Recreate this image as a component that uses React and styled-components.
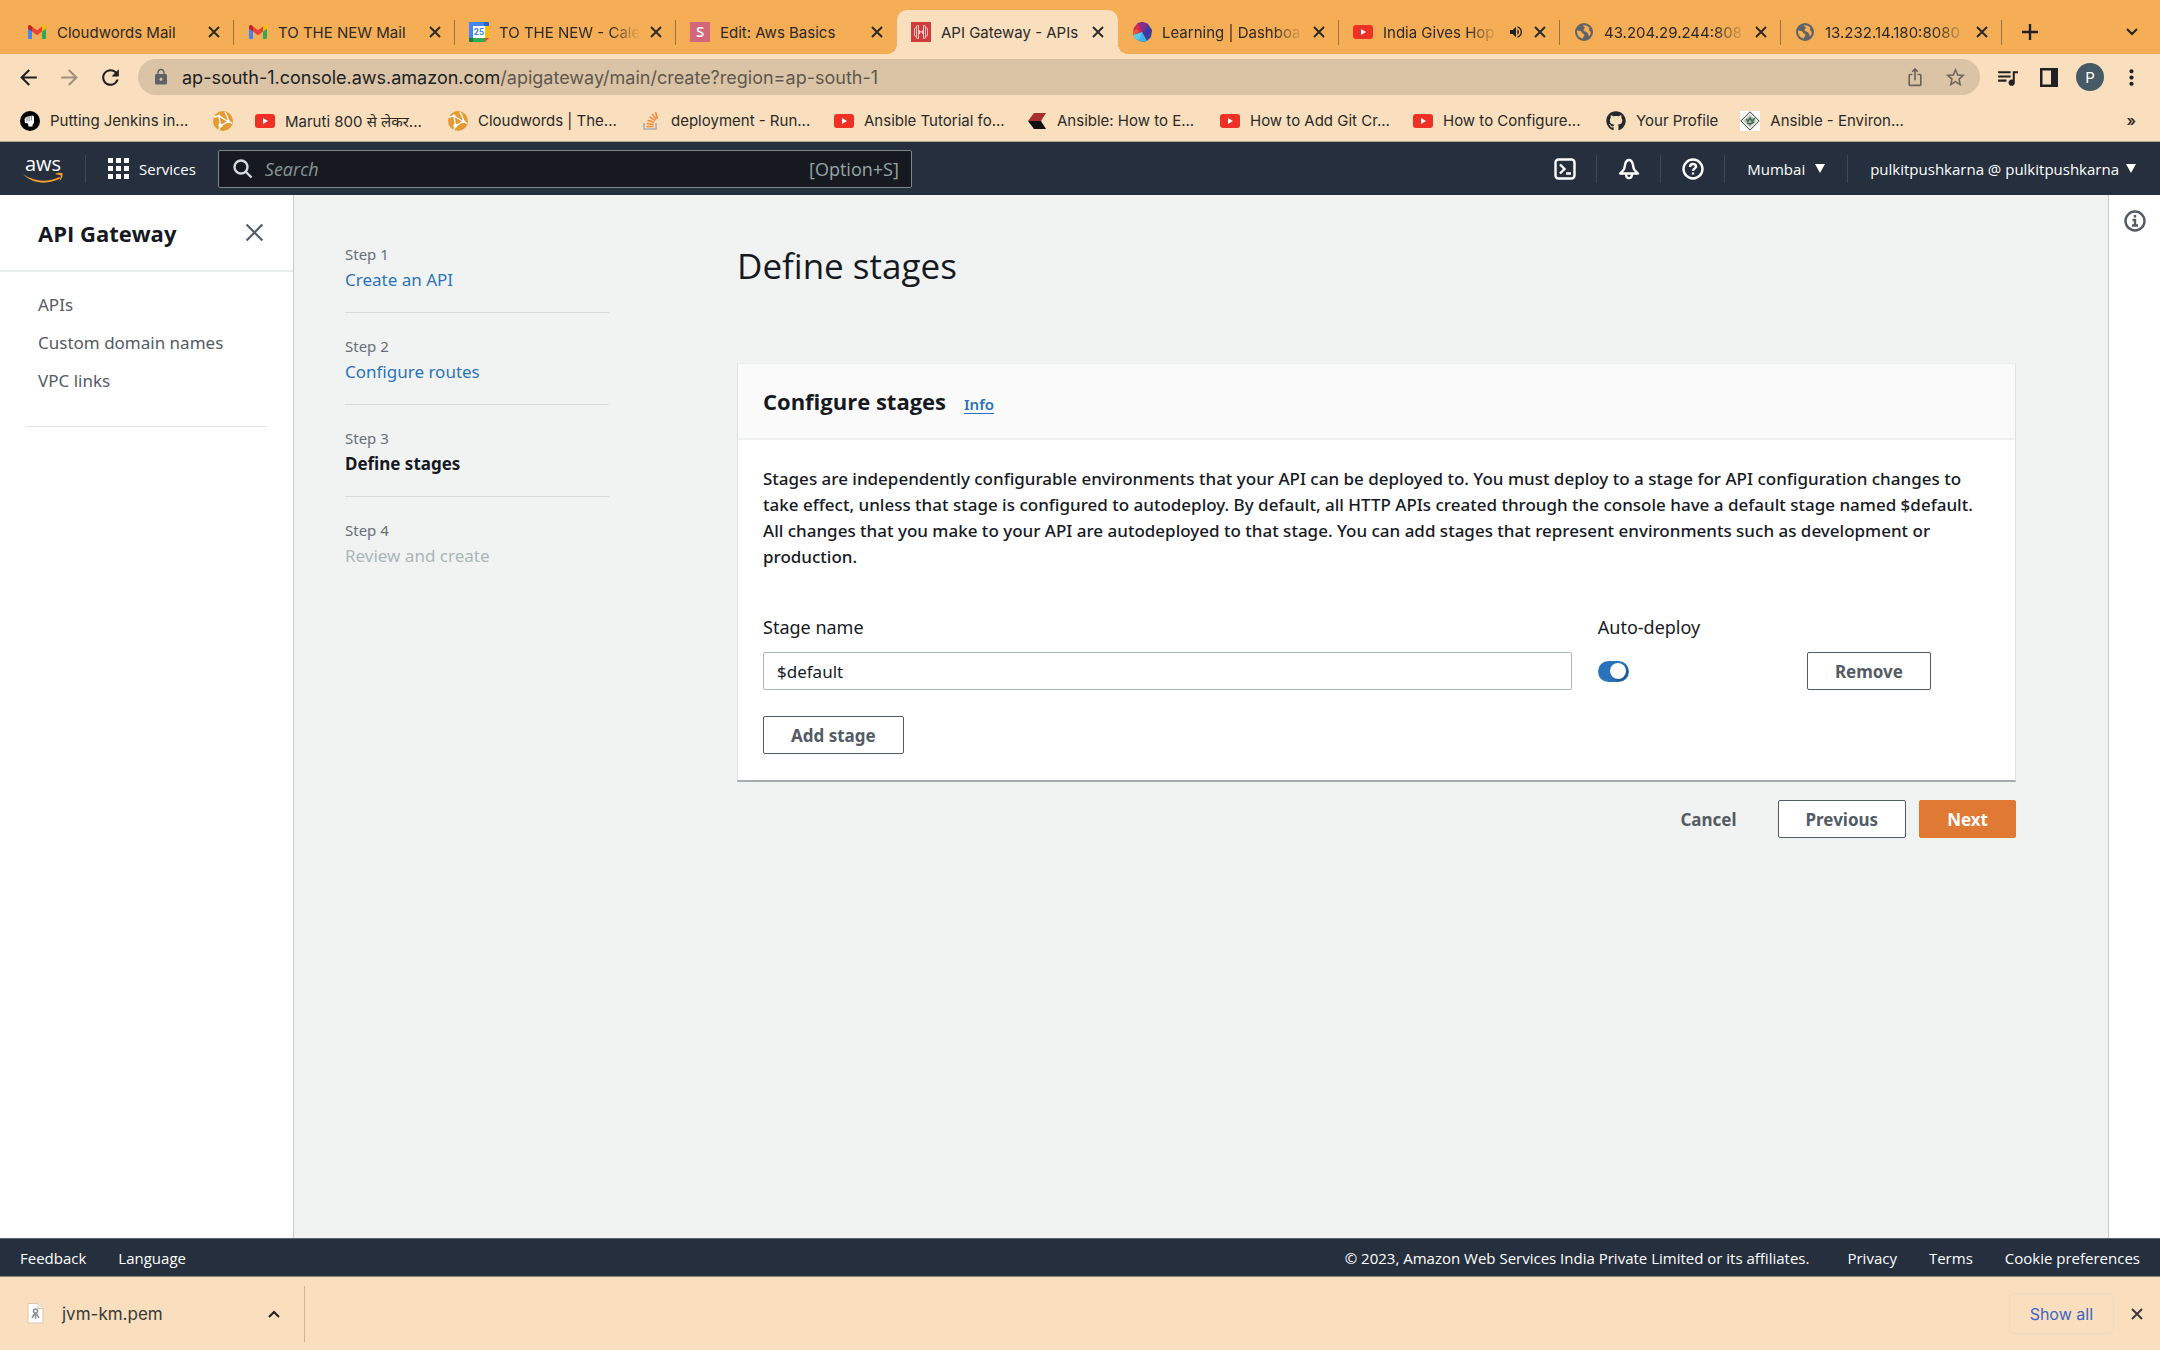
import React, { useState } from 'react';
import styled, { createGlobalStyle, css } from 'styled-components';
import {
  MdArrowBack,
  MdArrowForward,
  MdRefresh,
  MdLock,
  MdIosShare,
  MdStarBorder,
  MdQueueMusic,
  MdMoreVert,
  MdVolumeUp,
} from 'react-icons/md';
import { FaGithub } from 'react-icons/fa';

const GlobalStyle = createGlobalStyle`
  * {
    box-sizing: border-box;
  }
  body {
    margin: 0;
    font-family: 'Noto Sans', 'Open Sans', sans-serif;
    font-size: 17px;
    color: #16191f;
  }
  h1, h2, nav, footer {
    font-family: 'Open Sans', 'Noto Sans', sans-serif;
  }
  button, input {
    font-family: inherit;
    font-size: inherit;
  }
  button {
    cursor: pointer;
  }
  a {
    text-decoration: none;
    color: inherit;
  }
`;

const Window = styled.div`
  display: flex;
  flex-direction: column;
  min-height: 100vh;
`;

const BrowserHeader = styled.header`
  font-family: Inter, 'Noto Sans', sans-serif;
  font-size: 15px;
  color: #2b2a29;
  background-color: #f9dfbd;
  border-bottom: 1px solid #b3a68f;
`;

const PlainButton = styled.button`
  display: flex;
  align-items: center;
  justify-content: center;
  padding: 0;
  border: none;
  background: none;
  color: inherit;
`;

/* ---------- tab strip ---------- */

const TabStrip = styled.div`
  display: flex;
  align-items: flex-end;
  height: 54px;
  padding: 0 20px 0 13px;
  background-color: #f5ae56;
`;

const Tab = styled.div`
  position: relative;
  display: flex;
  align-items: center;
  flex: 0 1 221px;
  min-width: 0;
  height: 44px;
  padding: 0 14px;
  gap: 10px;

  ${props => props.$active && css`
    background-color: #f9dfbd;
    border-radius: 10px 10px 0 0;

    &::before, &::after {
      content: '';
      position: absolute;
      bottom: 0;
      width: 10px;
      height: 10px;
    }
    &::before {
      left: -10px;
      background: radial-gradient(circle at 0 0, transparent 10px, #f9dfbd 10px);
    }
    &::after {
      right: -10px;
      background: radial-gradient(circle at 100% 0, transparent 10px, #f9dfbd 10px);
    }
  `}

  ${props => props.$divider && css`
    background: linear-gradient(#9c7440, #9c7440) right center / 1px 25px no-repeat;
  `}
`;

const TabLabel = styled.span`
  flex: 1;
  min-width: 0;
  white-space: nowrap;
  ${props => props.$fade && css`
    mask-image: linear-gradient(to right, #000 calc(100% - 30px), transparent);
  `}
`;

const StripButton = styled(PlainButton)`
  height: 44px;
  width: 40px;
  margin-left: ${props => (props.$last ? 'auto' : '8px')};
  margin-right: ${props => (props.$last ? '-12px' : '0')};
`;

/* ---------- toolbar ---------- */

const Toolbar = styled.div`
  display: flex;
  align-items: center;
  height: 46px;
  padding: 0 15px;
  gap: 14px;
`;

const ToolGroup = styled.div`
  display: flex;
  align-items: center;
  gap: 14px;
  color: #202124;
`;

const ToolButton = styled(PlainButton)`
  width: 27px;
  height: 28px;
  font-size: 25px;
  color: ${props => props.$color || 'inherit'};
`;

const Omnibox = styled.div`
  flex: 1;
  display: flex;
  align-items: center;
  height: 36px;
  padding: 0 11px 0 14px;
  gap: 12px;
  border-radius: 18px;
  background-color: #dbc4a6;
  color: #5f6368;
  font-size: 18px;
`;

const Url = styled.span`
  flex: 1;
  color: #5f584f;
  white-space: nowrap;
  b {
    font-weight: 400;
    color: #202124;
  }
`;

const Avatar = styled(PlainButton)`
  width: 28px;
  height: 28px;
  border-radius: 50%;
  background-color: #455a64;
  color: #fff;
  font-size: 15px;
`;

/* ---------- bookmarks ---------- */

const Bookmarks = styled.nav`
  display: flex;
  align-items: center;
  height: 41px;
  padding: 0 24px 0 20px;
  gap: 22px;
  font-family: Inter, 'Noto Sans', sans-serif;
`;

const Bookmark = styled.a`
  display: flex;
  align-items: center;
  gap: 10px;
  white-space: nowrap;
  svg {
    flex: none;
  }
`;

const BookmarkLabel = styled.span`
  width: ${props => (props.$cut ? '141px' : 'auto')};
`;

const MoreBookmarks = styled(PlainButton)`
  margin-left: auto;
  font-weight: 600;
`;

/* ---------- console nav ---------- */

const ConsoleNav = styled.nav`
  display: flex;
  align-items: center;
  height: 53px;
  padding: 0 24px 0 22px;
  background-color: #252f3e;
  color: #fff;
  font-size: 15px;
  font-weight: 500;
`;

const LogoLink = styled.a`
  display: flex;
  margin-right: 21px;
`;

const NavDivider = styled.span`
  width: 1px;
  height: 28px;
  background-color: #414750;
`;

const NavButton = styled(PlainButton)`
  gap: 10px;
  padding: 0 22px;
  white-space: nowrap;
  font-weight: 500;
`;

const NavIcon = styled(PlainButton)`
  width: 63px;
`;

const SearchBox = styled.label`
  display: flex;
  align-items: center;
  flex: 0 1 694px;
  height: 38px;
  padding: 0 12px 0 14px;
  gap: 12px;
  background-color: #16191f;
  border: 1px solid #7b8788;
  border-radius: 2px;
  color: #95a5a6;
  font-size: 18px;
`;

const SearchInput = styled.input`
  flex: 1;
  min-width: 0;
  padding: 0;
  border: none;
  outline: none;
  background: none;
  color: #fff;
  &::placeholder {
    color: #879596;
    font-style: italic;
  }
`;

const NavRight = styled.div`
  display: flex;
  align-items: center;
  margin-left: auto;
`;

const UserButton = styled(NavButton)`
  padding-right: 0;
  gap: 7px;
`;

/* ---------- page ---------- */

const Page = styled.div`
  flex: 1;
  display: flex;
  background-color: #f1f3f3;
`;

const SideNav = styled.aside`
  flex: 0 0 294px;
  background-color: #fff;
  border-right: 1px solid #c5cccc;
`;

const SideHeader = styled.div`
  display: flex;
  align-items: center;
  justify-content: space-between;
  height: 77px;
  padding: 0 29px 0 38px;
  border-bottom: 2px solid #eaeded;
  color: #545b64;
`;

const SideTitle = styled.h2`
  margin: 0;
  font-size: 22px;
  line-height: 28px;
  color: #16191f;
`;

const SideLinks = styled.ul`
  display: flex;
  flex-direction: column;
  gap: 12px;
  margin: 0 26px;
  padding: 20px 12px 32px;
  border-bottom: 1px solid #e3e6e6;
  list-style: none;
  line-height: 26px;
  color: #545b64;
`;

const Wizard = styled.main`
  flex: 1;
  display: grid;
  grid-template-columns: 264px minmax(0, 1fr);
  align-items: start;
  column-gap: 128px;
  padding: 46px 92px 0 51px;
`;

const Steps = styled.ol`
  margin: 0;
  padding: 0;
  list-style: none;
`;

const Step = styled.li`
  height: 92px;
  & + & {
    border-top: 1px solid #d5dbdb;
    padding-top: 20px;
  }
  &:first-child {
    height: 71px;
  }
`;

const StepLabel = styled.div`
  font-size: 15px;
  line-height: 26px;
  color: #687078;
`;

const stepColors = { done: '#2a73bb', current: '#16191f', todo: '#aab7b8' };

const StepName = styled.a`
  display: block;
  line-height: 26px;
  font-weight: ${props => (props.$state === 'current' ? 700 : 400)};
  color: ${props => stepColors[props.$state]};
`;

const PageTitle = styled.h1`
  margin: 0 0 72px;
  font-size: 35px;
  line-height: 50px;
  font-weight: 400;
`;

const Card = styled.section`
  background-color: #fff;
  border: 1px solid #dfe3e3;
  border-top-color: #eaeded;
  border-bottom: 2px solid #a5abae;
`;

const CardHeader = styled.div`
  display: flex;
  align-items: baseline;
  gap: 18px;
  padding: 23px 25px 23px;
  background-color: #fafafa;
  border-bottom: 2px solid #eff1f1;
`;

const CardTitle = styled.h2`
  margin: 0;
  font-size: 22px;
  line-height: 28px;
`;

const InfoLink = styled.a`
  font-size: 15px;
  font-weight: 600;
  color: #2a73bb;
  text-decoration: underline;
  text-underline-offset: 3px;
`;

const CardBody = styled.div`
  padding: 26px 25px;
`;

const Description = styled.p`
  max-width: 1210px;
  margin: 0 0 44px;
  line-height: 26px;
  font-weight: 500;
`;

const StageGrid = styled.div`
  display: grid;
  grid-template-columns: 53fr 12fr 12fr;
  column-gap: 26px;
  align-items: end;
  margin-bottom: 26px;
`;

const Field = styled.div`
  display: flex;
  flex-direction: column;
  align-items: flex-start;
  gap: 12px;
  line-height: 26px;
`;

const FieldLabel = styled.label`
  font-size: 18px;
`;

const TextInput = styled.input`
  width: 100%;
  height: 38px;
  padding: 0 13px;
  border: 1px solid #aab7b8;
  border-radius: 2px;
  background-color: #fff;
  color: #16191f;
`;

const ToggleSlot = styled.div`
  display: flex;
  align-items: center;
  height: 38px;
`;

const Toggle = styled.input`
  appearance: none;
  display: flex;
  justify-content: ${props => (props.checked ? 'flex-end' : 'flex-start')};
  align-items: center;
  width: 31px;
  height: 21px;
  margin: 0;
  padding: 0 3px;
  border-radius: 11px;
  background-color: ${props => (props.checked ? '#2a73b8' : '#879596')};
  cursor: pointer;
  &::before {
    content: '';
    width: 16px;
    height: 16px;
    border-radius: 50%;
    background-color: #fff;
    box-shadow: 1px 1px 0 1px rgba(0, 28, 80, 0.3);
  }
`;

const Button = styled.button`
  height: 38px;
  padding: 0 27px;
  border: 1px solid #545b64;
  border-radius: 2px;
  background-color: #fff;
  color: #545b64;
  font-weight: 700;
  justify-self: start;

  ${props => props.$variant === 'link' && css`
    border-color: transparent;
    background-color: transparent;
  `}
  ${props => props.$variant === 'primary' && css`
    border-color: #e07933;
    background-color: #e07933;
    color: #fff;
  `}
`;

const Actions = styled.div`
  display: flex;
  justify-content: flex-end;
  gap: 13px;
  margin-top: 18px;
`;

const InfoRail = styled.aside`
  flex: 0 0 52px;
  display: flex;
  flex-direction: column;
  align-items: center;
  padding-top: 15px;
  background-color: #fff;
  border-left: 1px solid #c5cccc;
  color: #545b64;
`;

const Footer = styled.footer`
  display: flex;
  align-items: center;
  height: 39px;
  padding: 0 20px;
  gap: 32px;
  border-top: 1px solid #5a626d;
  border-bottom: 1px solid #8d857b;
  background-color: #252f3e;
  color: #fff;
  font-size: 15px;
  font-weight: 500;
  white-space: nowrap;
`;

const Copyright = styled.span`
  margin-left: auto;
  margin-right: 6px;
`;

/* ---------- downloads ---------- */

const DownloadBar = styled.div`
  display: flex;
  align-items: center;
  height: 73px;
  padding: 0 17px 0 27px;
  background-color: #f9dfbd;
  font-family: Inter, sans-serif;
  font-size: 17px;
  color: #3c3a37;
`;

const DownloadItem = styled.div`
  display: flex;
  align-items: center;
  gap: 18px;
  width: 278px;
  height: 56px;
  padding-right: 23px;
  border-right: 1px solid #c9b497;
`;

const DownloadName = styled.span`
  flex: 1;
`;

const ShowAll = styled(PlainButton)`
  height: 41px;
  margin-left: auto;
  margin-right: 17px;
  padding: 0 20px;
  border: 1px solid #ecdcc4;
  border-radius: 5px;
  color: #3a66c4;
  font-size: 16px;
`;

/* ---------- icons ---------- */

const CrossIcon = ({ size = 12, width = 2 }) => (
  <svg width={size} height={size} viewBox="0 0 12 12" fill="none" stroke="currentColor" strokeWidth={width}>
    <path d="M1 1l10 10M11 1L1 11" />
  </svg>
);

const ChevronIcon = ({ up }) => (
  <svg width="14" height="10" viewBox="0 0 14 10" fill="none" stroke="#202124" strokeWidth="2">
    <path d={up ? 'M2 8l5-5 5 5' : 'M2 2l5 5 5-5'} />
  </svg>
);

const GmailIcon = () => (
  <svg width="20" height="20" viewBox="0 0 20 20">
    <path d="M1 5.500V16a1 1 0 0 0 1 1h3V9z" fill="#4285f4" />
    <path d="M19 5.500V16a1 1 0 0 1-1 1h-3V9z" fill="#34a853" />
    <path d="M15 5v4.500l4-3V5c0-2-2-2.700-3.200-1.700z" fill="#fbbc04" />
    <path d="M5 9.500V4.500l5 3.800 5-3.800v5l-5 3.800z" fill="#ea4335" />
    <path d="M1 5v1.500l4 3v-5l-.8-.7C3 2.500 1 3 1 5z" fill="#c5221f" />
  </svg>
);

const CalendarIcon = () => (
  <svg width="20" height="20" viewBox="0 0 20 20">
    <path d="M1 0h14v4H4v12H0V1a1 1 0 0 1 1-1z" fill="#4285f4" />
    <path d="M15 0h4a1 1 0 0 1 1 1v4h-5z" fill="#1967d2" />
    <path d="M16 4h4v12h-4z" fill="#fbbc04" />
    <path d="M0 16h4v4H1a1 1 0 0 1-1-1z" fill="#188038" />
    <path d="M4 16h12v4H4z" fill="#34a853" />
    <path d="M16 16h4l-4 4z" fill="#ea4335" />
    <path d="M4 4h12v12H4z" fill="#fff" />
    <text x="10" y="13" textAnchor="middle" fontFamily="Roboto, sans-serif" fontSize="9" fontWeight="700" fill="#4285f4">25</text>
  </svg>
);

const LetterIcon = () => (
  <svg width="20" height="20" viewBox="0 0 20 20">
    <path d="M0 0h20v20H0z" fill="#d4667c" />
    <text x="10" y="15" textAnchor="middle" fontFamily="Open Sans, sans-serif" fontSize="15" fontWeight="600" fill="#fff">S</text>
  </svg>
);

const GatewayIcon = () => (
  <svg width="20" height="20" viewBox="0 0 20 20" fill="none" stroke="#f6c3c4" strokeWidth="1">
    <path d="M0 0h20v20H0z" fill="#d13c41" stroke="none" />
    <path d="M5.500 5.500L3.500 6.500v7l2 1zM5.500 4l2-0.500v13l-2-.5zM14.500 5.500l2 1v7l-2 1zM14.500 4l-2-0.500v13l2-.5zM8.500 12V8.500l1.500 2 1.500-2V12" />
  </svg>
);

const LearningIcon = () => (
  <svg width="20" height="20" viewBox="0 0 20 20">
    <path d="M6 1l5-1 5 2 4 6-1 7-4 4-5 1-6-3-3-5 1-6z" fill="#3b3f9f" />
    <path d="M6 1l5-1 5 2-3 6-4 3-4-4z" fill="#8a2b8c" />
    <path d="M2 6l4-5 2 5 2 5-4 1-5 1z" fill="#d8294a" />
    <path d="M1 9l4-2 2 3-6 3z" fill="#f0563a" />
    <path d="M10 10l5 9-5 1-6-3-3-4 5-1z" fill="#3fb2e8" />
    <path d="M10 10l-3 8-3-1-3-4z" fill="#5ccbf2" />
    <path d="M13 8l6-1 1 3-7 3z" fill="#4a2fa5" />
  </svg>
);

const YoutubeIcon = () => (
  <svg width="20" height="20" viewBox="0 0 20 20">
    <rect x="0" y="3" width="20" height="14" rx="3" fill="#ee3124" />
    <path d="M8 7l5 3-5 3z" fill="#fff" />
  </svg>
);

const FistIcon = () => (
  <svg width="20" height="20" viewBox="0 0 20 20">
    <circle cx="10" cy="10" r="10" fill="#000" />
    <path d="M4.500 8l1.500-2 6.500-1.500 1.500 1v6l-1.500 2.500v1.500H8.500l-.5-3-3-.5z" fill="#fff" />
    <path d="M7 6v4.500M9.200 5.500v5M11.400 5v4.500" stroke="#000" strokeWidth=".5" fill="none" />
  </svg>
);

const CloudwordsIcon = () => (
  <svg width="20" height="20" viewBox="0 0 20 20">
    <circle cx="10" cy="10" r="10" fill="#e59a35" />
    <path d="M1 6l5-1 9 5.500-7.500 4.500L6 5M12 1l2 4 2 5.500 3 2M7 15.500l-1 3.500" stroke="#fff" strokeWidth="1.300" fill="none" />
    <circle cx="15.500" cy="10.500" r="1.600" fill="#fff" />
    <circle cx="7.500" cy="14.500" r="2.100" fill="#fff" />
    <circle cx="6" cy="5" r="1.400" fill="#fff" />
  </svg>
);

const StackIcon = () => (
  <svg width="20" height="20" viewBox="0 0 20 20" fill="none">
    <path d="M3 12v6h12v-6" stroke="#a9adb0" strokeWidth="1.600" />
    <path d="M5.500 15.500h7M5.700 12.500l7 .9M6.600 9.200l6.500 2M8.500 5.800l5.700 3.700M11.200 3l4.200 5.300M14.500 1l2 6.500" stroke="#ef8b3c" strokeWidth="1.500" />
  </svg>
);

const ChevronLogo = () => (
  <svg width="20" height="20" viewBox="0 0 20 20">
    <path d="M7 2h12l-5 8H1z" fill="#a5302d" />
    <path d="M1 10h13l5 8H7z" fill="#111" />
  </svg>
);

const DiamondIcon = () => (
  <svg width="20" height="20" viewBox="0 0 20 20">
    <path d="M0 0h20v20H0z" fill="#fff" />
    <path d="M10 .800l9.200 9.200-9.200 9.200-9.200-9.200z" fill="#e6e8e6" stroke="#3c403e" strokeWidth="1" />
    <path d="M10 4l6 6-6 6-6-6z" fill="#a9bbad" />
    <path d="M6 8l2 2 2-3 2 3 3-3M7 12l3 1 4-2" stroke="#3f6b4c" strokeWidth="1.500" fill="none" />
  </svg>
);

const AwsLogo = () => (
  <svg width="42" height="40" viewBox="0 0 42 40">
    <text x="21" y="22" textAnchor="middle" fontFamily="Open Sans, sans-serif" fontSize="20" fontWeight="500" fill="#fff">aws</text>
    <path d="M1 25c11 8 25 8.500 36.500 3l.6 1.600C26 36 10 35 1 25z" fill="#f49c2e" />
    <path d="M33 25c3-1.500 6.500-1.300 7.500-.6.600 1.300-.6 5.600-3 7.600 .6-2.200 1.800-4.600 1.100-5.500-.7-.8-3.200-.8-5.600-1.500z" fill="#f49c2e" />
  </svg>
);

const GridIcon = () => (
  <svg width="21" height="21" viewBox="0 0 21 21" fill="#fff">
    {[0, 8, 16].map(y => [0, 8, 16].map(x => <rect key={`${x}-${y}`} x={x} y={y} width="5" height="5" />))}
  </svg>
);

const SearchIcon = () => (
  <svg width="20" height="20" viewBox="0 0 20 20" fill="none" stroke="#d5dbdb" strokeWidth="2.400">
    <circle cx="8" cy="8" r="6.500" />
    <path d="M12.500 12.500l6 6" />
  </svg>
);

const TerminalIcon = () => (
  <svg width="22" height="22" viewBox="0 0 22 22" fill="none" stroke="#fff" strokeWidth="2.400">
    <rect x="1.500" y="1.500" width="19" height="19" rx="3" />
    <path d="M6 6.500l4.500 4.500L6 15.500M12 15.500h5" />
  </svg>
);

const BellIcon = () => (
  <svg width="22" height="22" viewBox="0 0 22 22" fill="none" stroke="#fff" strokeWidth="2.400" strokeLinejoin="round">
    <path d="M2 15.500h18l-3.500-3.500c-1.300-1.300-.9-3-1.500-5C14.400 4 13 2 11 2S7.600 4 7 7c-.6 2-.2 3.700-1.500 5z" />
    <path d="M8 16c0 5.500 6 5.500 6 0" />
  </svg>
);

const HelpIcon = () => (
  <svg width="22" height="22" viewBox="0 0 22 22" fill="none" stroke="#fff" strokeWidth="2.400">
    <circle cx="11" cy="11" r="9.500" />
    <path d="M8 9c0-4 6-4 6-.5 0 2-3 2-3 4.500" />
    <path d="M11 14.500v2" />
  </svg>
);

const Caret = () => (
  <svg width="10" height="9" viewBox="0 0 10 9" fill="#fff">
    <path d="M0 0h10L5 9z" />
  </svg>
);

const InfoIcon = () => (
  <svg width="22" height="22" viewBox="0 0 22 22" fill="none" stroke="currentColor" strokeWidth="2.400">
    <circle cx="11" cy="11" r="9.500" />
    <path d="M11 5v2.500M8.500 10H11v5.500M8 15.500h6" />
  </svg>
);

const PanelIcon = () => (
  <svg width="20" height="19" viewBox="0 0 20 19">
    <path d="M1 0h18v19H1zM3.500 2.500v14H12v-14z" fill="#202124" fillRule="evenodd" />
  </svg>
);

const FileIcon = () => (
  <svg width="17" height="21" viewBox="0 0 17 21">
    <path d="M1 .500h10l5 5v14.500H1z" fill="#fff" stroke="#d6c9b5" />
    <path d="M11 .500v5h5" fill="#eee" stroke="#d6c9b5" />
    <circle cx="8.500" cy="8" r="2" fill="none" stroke="#8b9093" strokeWidth="1.500" />
    <path d="M8 10l-3 5M8.500 10v6M9 10l3 5" stroke="#8b9093" strokeWidth="1.500" />
  </svg>
);

const GlobeIcon = () => (
  <svg width="20" height="20" viewBox="0 0 20 20">
    <circle cx="10" cy="10" r="9" fill="#5f6368" />
    <path d="M3 8.500c2 .5 4.500.2 5 2 .4 1.500 2.500 1 2.500 2.500 0 1.200-1.500 1.300-1.500 3.500-3.500-.3-6.500-3.500-6-8zM9 3.500c2.500-.5 5 .5 6.500 2.500-1 1.500-.5 2.500 1 3.500.5 2-.2 3.500-1.500 5-.8-1.500-.5-3.500-2.500-4.500-1.500-.7-3-.5-3-2s2-1.500 1.500-2.500S9 5 9 3.500z" fill="#f5ae56" />
  </svg>
);

/* ---------- data ---------- */

const tabs = [
  { icon: GmailIcon, label: 'Cloudwords Mail', divider: true },
  { icon: GmailIcon, label: 'TO THE NEW Mail', divider: true },
  { icon: CalendarIcon, label: 'TO THE NEW - Cale', fade: true, divider: true },
  { icon: LetterIcon, label: 'Edit: Aws Basics' },
  { icon: GatewayIcon, label: 'API Gateway - APIs', active: true },
  { icon: LearningIcon, label: 'Learning | Dashboa', fade: true, divider: true },
  { icon: YoutubeIcon, label: 'India Gives Hop', fade: true, audio: true, divider: true },
  { icon: GlobeIcon, label: '43.204.29.244:808', fade: true, divider: true },
  { icon: GlobeIcon, label: '13.232.14.180:8080', fade: true, divider: true },
];

const bookmarks = [
  { icon: FistIcon, label: 'Putting Jenkins in...', cut: true },
  { icon: CloudwordsIcon },
  { icon: YoutubeIcon, label: 'Maruti 800 से लेकर...', cut: true },
  { icon: CloudwordsIcon, label: 'Cloudwords | The...', cut: true },
  { icon: StackIcon, label: 'deployment - Run...', cut: true },
  { icon: YoutubeIcon, label: 'Ansible Tutorial fo...', cut: true },
  { icon: ChevronLogo, label: 'Ansible: How to E...', cut: true },
  { icon: YoutubeIcon, label: 'How to Add Git Cr...', cut: true },
  { icon: YoutubeIcon, label: 'How to Configure...', cut: true },
  { icon: () => <FaGithub size={20} color="#24292e" />, label: 'Your Profile' },
  { icon: DiamondIcon, label: 'Ansible - Environ...', cut: true },
];

const steps = [
  { name: 'Create an API', state: 'done' },
  { name: 'Configure routes', state: 'done' },
  { name: 'Define stages', state: 'current' },
  { name: 'Review and create', state: 'todo' },
];

const App = () => {
  const [stageName, setStageName] = useState('$default');
  const [autoDeploy, setAutoDeploy] = useState(true);

  return (
    <Window>
      <GlobalStyle />
      <BrowserHeader>
        <TabStrip>
          {tabs.map(({ icon: Icon, label, active, fade, audio, divider }) => (
            <Tab key={label} $active={active} $divider={divider}>
              <Icon />
              <TabLabel $fade={fade}>{label}</TabLabel>
              {audio && <MdVolumeUp size={16} color="#202124" />}
              <PlainButton aria-label="Close tab"><CrossIcon /></PlainButton>
            </Tab>
          ))}
          <StripButton aria-label="New tab">
            <svg width="16" height="16" viewBox="0 0 16 16" stroke="#202124" strokeWidth="2.400">
              <path d="M8 0v16M0 8h16" />
            </svg>
          </StripButton>
          <StripButton $last aria-label="Search tabs"><ChevronIcon /></StripButton>
        </TabStrip>

        <Toolbar>
          <ToolGroup>
            <ToolButton aria-label="Back"><MdArrowBack /></ToolButton>
            <ToolButton aria-label="Forward" $color="#a0917c"><MdArrowForward /></ToolButton>
            <ToolButton aria-label="Reload"><MdRefresh /></ToolButton>
          </ToolGroup>
          <Omnibox>
            <MdLock size={18} />
            <Url><b>ap-south-1.console.aws.amazon.com</b>/apigateway/main/create?region=ap-south-1</Url>
            <ToolGroup>
              <ToolButton aria-label="Share" $color="#6b655d"><MdIosShare size={20} /></ToolButton>
              <ToolButton aria-label="Bookmark" $color="#6b655d"><MdStarBorder size={23} /></ToolButton>
            </ToolGroup>
          </Omnibox>
          <ToolGroup>
            <ToolButton aria-label="Media"><MdQueueMusic /></ToolButton>
            <ToolButton aria-label="Side panel"><PanelIcon /></ToolButton>
            <Avatar aria-label="Profile">P</Avatar>
            <ToolButton aria-label="Menu"><MdMoreVert /></ToolButton>
          </ToolGroup>
        </Toolbar>

        <Bookmarks>
          {bookmarks.map(({ icon: Icon, label, cut }, index) => (
            <Bookmark key={index} href="#">
              <Icon />
              {label && <BookmarkLabel $cut={cut}>{label}</BookmarkLabel>}
            </Bookmark>
          ))}
          <MoreBookmarks aria-label="More bookmarks">»</MoreBookmarks>
        </Bookmarks>
      </BrowserHeader>

      <ConsoleNav>
        <LogoLink href="#" aria-label="AWS home"><AwsLogo /></LogoLink>
        <NavDivider />
        <NavButton><GridIcon />Services</NavButton>
        <SearchBox>
          <SearchIcon />
          <SearchInput type="search" placeholder="Search" aria-label="Search" />
          [Option+S]
        </SearchBox>
        <NavRight>
          <NavIcon aria-label="CloudShell"><TerminalIcon /></NavIcon>
          <NavDivider />
          <NavIcon aria-label="Notifications"><BellIcon /></NavIcon>
          <NavDivider />
          <NavIcon aria-label="Help"><HelpIcon /></NavIcon>
          <NavDivider />
          <NavButton>Mumbai <Caret /></NavButton>
          <NavDivider />
          <UserButton>pulkitpushkarna @ pulkitpushkarna <Caret /></UserButton>
        </NavRight>
      </ConsoleNav>

      <Page>
        <SideNav>
          <SideHeader>
            <SideTitle>API Gateway</SideTitle>
            <PlainButton aria-label="Close navigation"><CrossIcon size={19} width={1.4} /></PlainButton>
          </SideHeader>
          <SideLinks>
            <li><a href="#">APIs</a></li>
            <li><a href="#">Custom domain names</a></li>
            <li><a href="#">VPC links</a></li>
          </SideLinks>
        </SideNav>

        <Wizard>
          <Steps>
            {steps.map((step, index) => (
              <Step key={step.name}>
                <StepLabel>Step {index + 1}</StepLabel>
                <StepName href="#" $state={step.state}>{step.name}</StepName>
              </Step>
            ))}
          </Steps>
          <div>
            <PageTitle>Define stages</PageTitle>
            <Card>
              <CardHeader>
                <CardTitle>Configure stages</CardTitle>
                <InfoLink href="#">Info</InfoLink>
              </CardHeader>
              <CardBody>
                <Description>
                  Stages are independently configurable environments that your API can be deployed to. You must
                  deploy to a stage for API configuration changes to take effect, unless that stage is configured
                  to autodeploy. By default, all HTTP APIs created through the console have a default stage named
                  $default. All changes that you make to your API are autodeployed to that stage. You can add
                  stages that represent environments such as development or production.
                </Description>
                <StageGrid>
                  <Field>
                    <FieldLabel htmlFor="stage-name">Stage name</FieldLabel>
                    <TextInput
                      id="stage-name"
                      type="text"
                      value={stageName}
                      onChange={e => setStageName(e.target.value)}
                    />
                  </Field>
                  <Field>
                    <FieldLabel htmlFor="auto-deploy">Auto-deploy</FieldLabel>
                    <ToggleSlot>
                      <Toggle
                        id="auto-deploy"
                        type="checkbox"
                        checked={autoDeploy}
                        onChange={e => setAutoDeploy(e.target.checked)}
                      />
                    </ToggleSlot>
                  </Field>
                  <Button>Remove</Button>
                </StageGrid>
                <Button>Add stage</Button>
              </CardBody>
            </Card>
            <Actions>
              <Button $variant="link">Cancel</Button>
              <Button>Previous</Button>
              <Button $variant="primary">Next</Button>
            </Actions>
          </div>
        </Wizard>

        <InfoRail>
          <PlainButton aria-label="Open help panel"><InfoIcon /></PlainButton>
        </InfoRail>
      </Page>

      <Footer>
        <a href="#">Feedback</a>
        <a href="#">Language</a>
        <Copyright>© 2023, Amazon Web Services India Private Limited or its affiliates.</Copyright>
        <a href="#">Privacy</a>
        <a href="#">Terms</a>
        <a href="#">Cookie preferences</a>
      </Footer>

      <DownloadBar>
        <DownloadItem>
          <FileIcon />
          <DownloadName>jvm-km.pem</DownloadName>
          <PlainButton aria-label="Download options"><ChevronIcon up /></PlainButton>
        </DownloadItem>
        <ShowAll>Show all</ShowAll>
        <PlainButton aria-label="Close downloads"><CrossIcon /></PlainButton>
      </DownloadBar>
    </Window>
  );
};

export default App;
